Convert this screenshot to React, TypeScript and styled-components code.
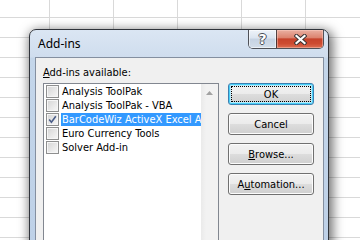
import styled, { createGlobalStyle, css } from 'styled-components';

const UI_FONT = `"DejaVu Sans Condensed", "DejaVu Sans", sans-serif`;
const TITLE_FONT = `"Noto Sans", "Open Sans", sans-serif`;

const GlobalStyle = createGlobalStyle`
  html, body {
    margin: 0;
    padding: 0;
  }
  body {
    width: 360px;
    height: 240px;
    overflow: hidden;
    background: #fff;
  }
`;

const Sheet = styled.div`
  position: relative;
  width: 360px;
  height: 240px;
  overflow: hidden;
  background-color: #fff;
  background-image: linear-gradient(to right, #d9d9d9 1px, transparent 1px),
    linear-gradient(to bottom, #d9d9d9 1px, transparent 1px);
  background-size: 64px 20px;
  background-position: 49px 17px;
`;

const Window = styled.div`
  position: absolute;
  left: 29px;
  top: 29px;
  width: 300px;
  height: 240px;
  box-sizing: border-box;
  display: flex;
  flex-direction: column;
  padding: 0 4px 0 5px;
  border: 1px solid #30343b;
  border-radius: 7px 7px 0 0;
  background: linear-gradient(to bottom, #dbe6f3 0px, #cfddee 27px, #c4d6ea 28px, #bdd0e7 100%);
  box-shadow: 2px 3px 11px 2px rgba(0, 0, 0, 0.55);
`;

const TitleBar = styled.div`
  display: flex;
  align-items: flex-start;
  height: 27px;
`;

const Title = styled.div`
  flex: 1;
  padding-left: 3px;
  font-family: ${TITLE_FONT};
  font-size: 12px;
  line-height: 27px;
  color: #000;
`;

const CaptionButtons = styled.div`
  display: flex;
  height: 19px;
  box-sizing: border-box;
  border: 1px solid rgba(45, 45, 50, 0.8);
  border-top: none;
  border-radius: 0 0 5px 5px;
  overflow: hidden;
`;

const CaptionButton = styled.div<{ $close?: boolean }>`
  display: flex;
  align-items: center;
  justify-content: center;
  width: 27px;
  background: linear-gradient(to bottom, #eef3f9 0%, #dbe4ef 45%, #c5d2e2 50%, #d3dde9 100%);
  box-shadow: inset 0 0 0 1px rgba(255, 255, 255, 0.55);

  ${({ $close }) =>
    $close &&
    css`
      width: 46px;
      border-left: 1px solid rgba(45, 45, 50, 0.8);
      background: linear-gradient(to bottom, #eab0a2 0%, #dc8470 42%, #c6432c 50%, #cd4b31 75%, #dc6e52 100%);
      box-shadow: inset 0 0 0 1px rgba(255, 210, 200, 0.45);
    `}
`;

const HelpGlyph = styled.span`
  font-family: "DejaVu Sans", sans-serif;
  font-weight: bold;
  font-size: 14px;
  line-height: 14px;
  color: #fff;
  text-shadow: -1px 0 0 #4a4f57, 1px 0 0 #4a4f57, 0 -1px 0 #4a4f57, 0 1px 0 #4a4f57;
`;

const Content = styled.div`
  flex: 1;
  box-sizing: border-box;
  border: 1px solid #848fa0;
  background: #f0f0f0;
  padding: 8px 9px 0 7px;
  font-family: ${UI_FONT};
  font-size: 11px;
  color: #000;
`;

const Label = styled.div`
  line-height: 14px;
  height: 14px;
  margin-bottom: 3px;
`;

const Body = styled.div`
  display: flex;
  gap: 9px;
  align-items: flex-start;
`;

const ListBox = styled.div`
  display: flex;
  width: 176px;
  height: 170px;
  box-sizing: border-box;
  border: 1px solid #828790;
  background: #fff;
`;

const Items = styled.div`
  flex: 1;
  min-width: 0;
`;

const Row = styled.div`
  display: flex;
  align-items: center;
  height: 14px;
  padding-left: 2px;
`;

const Check = styled.div`
  flex: none;
  width: 13px;
  height: 13px;
  box-sizing: border-box;
  margin-right: 2px;
  display: flex;
  align-items: center;
  justify-content: center;
  border: 1px solid #8e8f8f;
  background: linear-gradient(135deg, #d4d4d4 0%, #e8e8e8 55%, #f7f7f7 100%);
  box-shadow: inset 0 0 0 1px #f6f6f6;
`;

const ItemText = styled.div<{ $selected?: boolean }>`
  min-width: 0;
  height: 13px;
  line-height: 13px;
  padding: 0 2px 0 1px;
  white-space: nowrap;
  overflow: hidden;

  ${({ $selected }) =>
    $selected &&
    css`
      background: #3399ff;
      color: #fff;
    `}
`;

const ScrollBar = styled.div`
  flex: none;
  width: 17px;
  background: linear-gradient(to right, #eaeaea, #f2f2f2 30%, #f2f2f2);
`;

const ScrollArrow = styled.div`
  height: 17px;
  display: flex;
  align-items: center;
  justify-content: center;
`;

const Buttons = styled.div`
  display: flex;
  flex-direction: column;
  gap: 8px;
`;

const Button = styled.div<{ $default?: boolean }>`
  position: relative;
  width: 86px;
  height: 22px;
  box-sizing: border-box;
  display: flex;
  align-items: center;
  justify-content: center;
  border: 1px solid #707070;
  border-radius: 3px;
  background: linear-gradient(to bottom, #f2f2f2 0%, #ebebeb 50%, #dddddd 51%, #cfcfcf 100%);
  box-shadow: inset 0 0 0 1px #fcfcfc;

  ${({ $default }) =>
    $default &&
    css`
      border-color: #3c7fb1;
      box-shadow: inset 0 0 0 1px #48d0f8, inset 0 0 0 2px #b9e9fa;

      &::after {
        content: '';
        position: absolute;
        inset: 2px;
        border: 1px dotted #000;
      }
    `}
`;

const CheckMark = () => (
  <svg width="9" height="9" viewBox="0 0 9 9">
    <path d="M1.2 4.6 L3.4 7.2 L7.8 1.2" fill="none" stroke="#4a5d88" strokeWidth="1.6" />
  </svg>
);

const CloseIcon = () => (
  <svg width="13" height="11" viewBox="0 0 13 11">
    <g strokeLinecap="square">
      <path d="M2.5 2 L10.5 9 M10.5 2 L2.5 9" stroke="#3b3535" strokeWidth="4.2" />
      <path d="M2.5 2 L10.5 9 M10.5 2 L2.5 9" stroke="#fff" strokeWidth="2.2" />
    </g>
  </svg>
);

const UpArrow = () => (
  <svg width="7" height="4" viewBox="0 0 7 4">
    <path d="M0 4 L3.5 0 L7 4 Z" fill="#a2a2a2" />
  </svg>
);

const addIns = [
  { name: 'Analysis ToolPak', checked: false },
  { name: 'Analysis ToolPak - VBA', checked: false },
  { name: 'BarCodeWiz ActiveX Excel Add-in', checked: true, selected: true },
  { name: 'Euro Currency Tools', checked: false },
  { name: 'Solver Add-in', checked: false },
];

export default function App() {
  return (
    <>
      <GlobalStyle />
      <Sheet>
        <Window>
          <TitleBar>
            <Title>Add-ins</Title>
            <CaptionButtons>
              <CaptionButton>
                <HelpGlyph>?</HelpGlyph>
              </CaptionButton>
              <CaptionButton $close>
                <CloseIcon />
              </CaptionButton>
            </CaptionButtons>
          </TitleBar>
          <Content>
            <Label>
              <u>A</u>dd-ins available:
            </Label>
            <Body>
              <ListBox>
                <Items>
                  {addIns.map((item) => (
                    <Row key={item.name}>
                      <Check>{item.checked && <CheckMark />}</Check>
                      <ItemText $selected={item.selected}>{item.name}</ItemText>
                    </Row>
                  ))}
                </Items>
                <ScrollBar>
                  <ScrollArrow>
                    <UpArrow />
                  </ScrollArrow>
                </ScrollBar>
              </ListBox>
              <Buttons>
                <Button $default>OK</Button>
                <Button>Cancel</Button>
                <Button>
                  <span>
                    <u>B</u>rowse...
                  </span>
                </Button>
                <Button>
                  <span>
                    A<u>u</u>tomation...
                  </span>
                </Button>
              </Buttons>
            </Body>
          </Content>
        </Window>
      </Sheet>
    </>
  );
}
